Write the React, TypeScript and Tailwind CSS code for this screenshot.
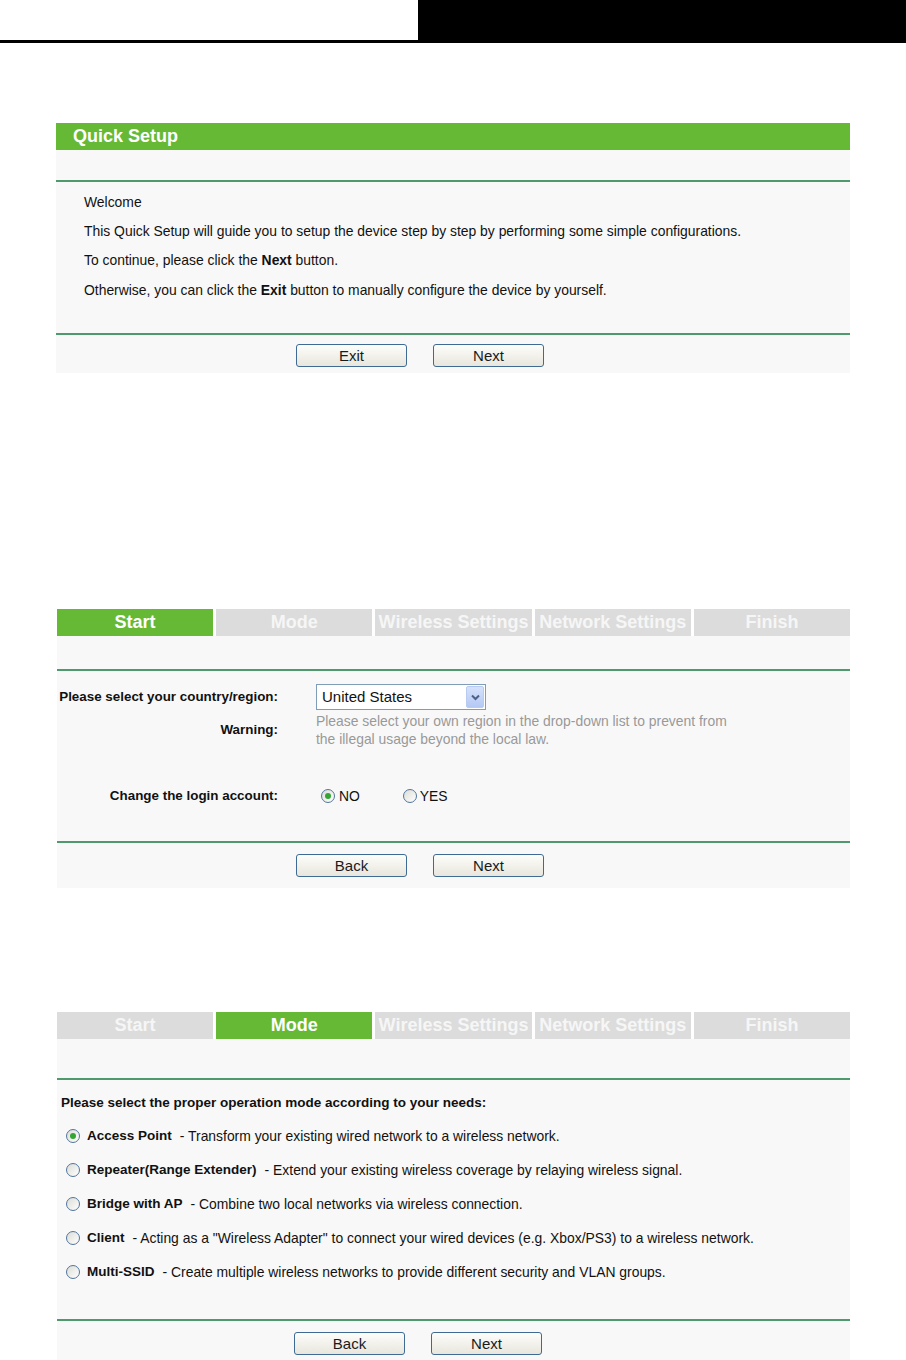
import React from 'react'

const font = { fontFamily: '"Liberation Sans", Arial, sans-serif' }

function Btn({ label }: { label: string }) {
  return (
    <button className="w-[111px] h-[23px] rounded-[3px] border border-[#3f6a94] bg-gradient-to-b from-[#fdfdfb] to-[#e8e6dc] text-[15px] text-[#1a1a1a] leading-none">
      {label}
    </button>
  )
}

function Radio({ checked }: { checked?: boolean }) {
  return (
    <span className="inline-flex items-center justify-center w-[14px] h-[14px] rounded-full border border-[#52759c] bg-gradient-to-br from-[#dcdcd6] to-[#ffffff] shrink-0">
      {checked && <span className="w-[6px] h-[6px] rounded-full bg-[#33a534]" />}
    </span>
  )
}

function Tabs({ active }: { active: number }) {
  const tabs = ['Start', 'Mode', 'Wireless Settings', 'Network Settings', 'Finish']
  return (
    <div className="flex gap-[3px] h-[27px]">
      {tabs.map((t, i) => (
        <div
          key={t}
          className={
            i === active
              ? 'flex-1 flex items-center justify-center bg-[#66b935] text-white text-[18px] font-bold whitespace-nowrap'
              : 'flex-1 flex items-center justify-center bg-[#dcdcdc] text-[#f6f6f6] text-[18px] font-bold whitespace-nowrap'
          }
        >
          {t}
        </div>
      ))}
    </div>
  )
}

function Divider() {
  return <div className="h-[2px] bg-[#4f9a6c]" />
}

function Footer({ a, b, h, pt, pl }: { a: string; b: string; h: string; pt: string; pl: string }) {
  return (
    <div className={`bg-[#f8f8f8] flex gap-[26px] ${h} ${pt} ${pl}`}>
      <Btn label={a} />
      <Btn label={b} />
    </div>
  )
}

const modes = [
  { name: 'Access Point', desc: 'Transform your existing wired network to a wireless network.', on: true },
  { name: 'Repeater(Range Extender)', desc: 'Extend your existing wireless coverage by relaying wireless signal.' },
  { name: 'Bridge with AP', desc: 'Combine two local networks via wireless connection.' },
  { name: 'Client', desc: 'Acting as a "Wireless Adapter" to connect your wired devices (e.g. Xbox/PS3) to a wireless network.' },
  { name: 'Multi-SSID', desc: 'Create multiple wireless networks to provide different security and VLAN groups.' },
]

export default function App() {
  return (
    <div className="w-[906px] h-[1360px] bg-white overflow-hidden text-[#111]" style={font}>
      {/* page header */}
      <div className="flex h-[43px]">
        <div className="w-[418px] border-b-[3px] border-black" />
        <div className="flex-1 bg-black" />
      </div>

      {/* Quick Setup welcome */}
      <div className="ml-[56px] w-[794px] mt-[80px]">
        <div className="h-[27px] bg-[#66b935] text-white text-[18px] font-bold pl-[17px] flex items-center">Quick Setup</div>
        <div className="h-[30px] bg-[#f8f8f8]" />
        <Divider />
        <div className="h-[151px] bg-[#f8f8f8] pl-[28px] pt-[10px] text-[13.9px] flex flex-col">
          <div className="h-[20px] flex items-center">Welcome</div>
          <div className="h-[20px] mt-[9px] flex items-center">This Quick Setup will guide you to setup the device step by step by performing some simple configurations.</div>
          <div className="h-[20px] mt-[9px] flex items-center">
            <span>To continue, please click the&nbsp;<b>Next</b>&nbsp;button.</span>
          </div>
          <div className="h-[20px] mt-[10px] flex items-center">
            <span>Otherwise, you can click the&nbsp;<b>Exit</b>&nbsp;button to manually configure the device by yourself.</span>
          </div>
        </div>
        <Divider />
        <Footer a="Exit" b="Next" h="h-[38px]" pt="pt-[9px]" pl="pl-[240px]" />
      </div>

      {/* Start step */}
      <div className="ml-[57px] w-[793px] mt-[236px]">
        <Tabs active={0} />
        <div className="h-[33px] bg-[#f8f8f8]" />
        <Divider />
        <div className="h-[170px] bg-[#f8f8f8] pt-[13px] text-[13.9px]">
          <div className="flex items-center h-[26px]">
            <div className="w-[221px] text-right font-bold text-[13.4px] whitespace-nowrap">Please select your country/region:</div>
            <div className="ml-[38px] w-[170px] h-[26px] border border-[#7f9db9] bg-white flex items-center">
              <span className="flex-1 pl-[5px] text-[15px]">United States</span>
              <span className="w-[18px] h-[22px] mr-[1px] rounded-[2px] border border-[#b9cbf0] bg-gradient-to-b from-[#d5e2fc] to-[#b4c8f4] flex items-center justify-center">
                <svg width="9" height="7" viewBox="0 0 9 7"><path d="M1 1.5 L4.5 5 L8 1.5" stroke="#4d6185" strokeWidth="2" fill="none" /></svg>
              </span>
            </div>
          </div>
          <div className="flex items-center h-[36px] mt-[2px]">
            <div className="w-[221px] text-right font-bold text-[13.4px]">Warning:</div>
            <div className="ml-[38px] text-[#999] leading-[18px]">
              Please select your own region in the drop-down list to prevent from<br />the illegal usage beyond the local law.
            </div>
          </div>
          <div className="flex items-center h-[20px] mt-[38px]">
            <div className="w-[221px] text-right font-bold text-[13.4px]">Change the login account:</div>
            <div className="ml-[43px] flex items-center">
              <Radio checked />
              <span className="ml-[4px]">NO</span>
              <span className="ml-[43px] flex items-center"><Radio /></span>
              <span className="ml-[3px]">YES</span>
            </div>
          </div>
        </div>
        <Divider />
        <Footer a="Back" b="Next" h="h-[45px]" pt="pt-[11px]" pl="pl-[239px]" />
      </div>

      {/* Mode step */}
      <div className="ml-[57px] w-[793px] mt-[124px]">
        <Tabs active={1} />
        <div className="h-[39px] bg-[#f8f8f8]" />
        <Divider />
        <div className="h-[239px] bg-[#f8f8f8] pt-[13px] text-[13.9px]">
          <div className="h-[20px] flex items-center pl-[4px] font-bold text-[13.5px]">Please select the proper operation mode according to your needs:</div>
          <div className="mt-[6px]">
            {modes.map((m) => (
              <div key={m.name} className="h-[34px] flex items-center pl-[9px]">
                <Radio checked={m.on} />
                <span className="ml-[7px] font-bold text-[13.5px]">{m.name}</span>
                <span className="ml-[8px]">- {m.desc}</span>
              </div>
            ))}
          </div>
        </div>
        <Divider />
        <Footer a="Back" b="Next" h="h-[39px]" pt="pt-[11px]" pl="pl-[237px]" />
      </div>
    </div>
  )
}
